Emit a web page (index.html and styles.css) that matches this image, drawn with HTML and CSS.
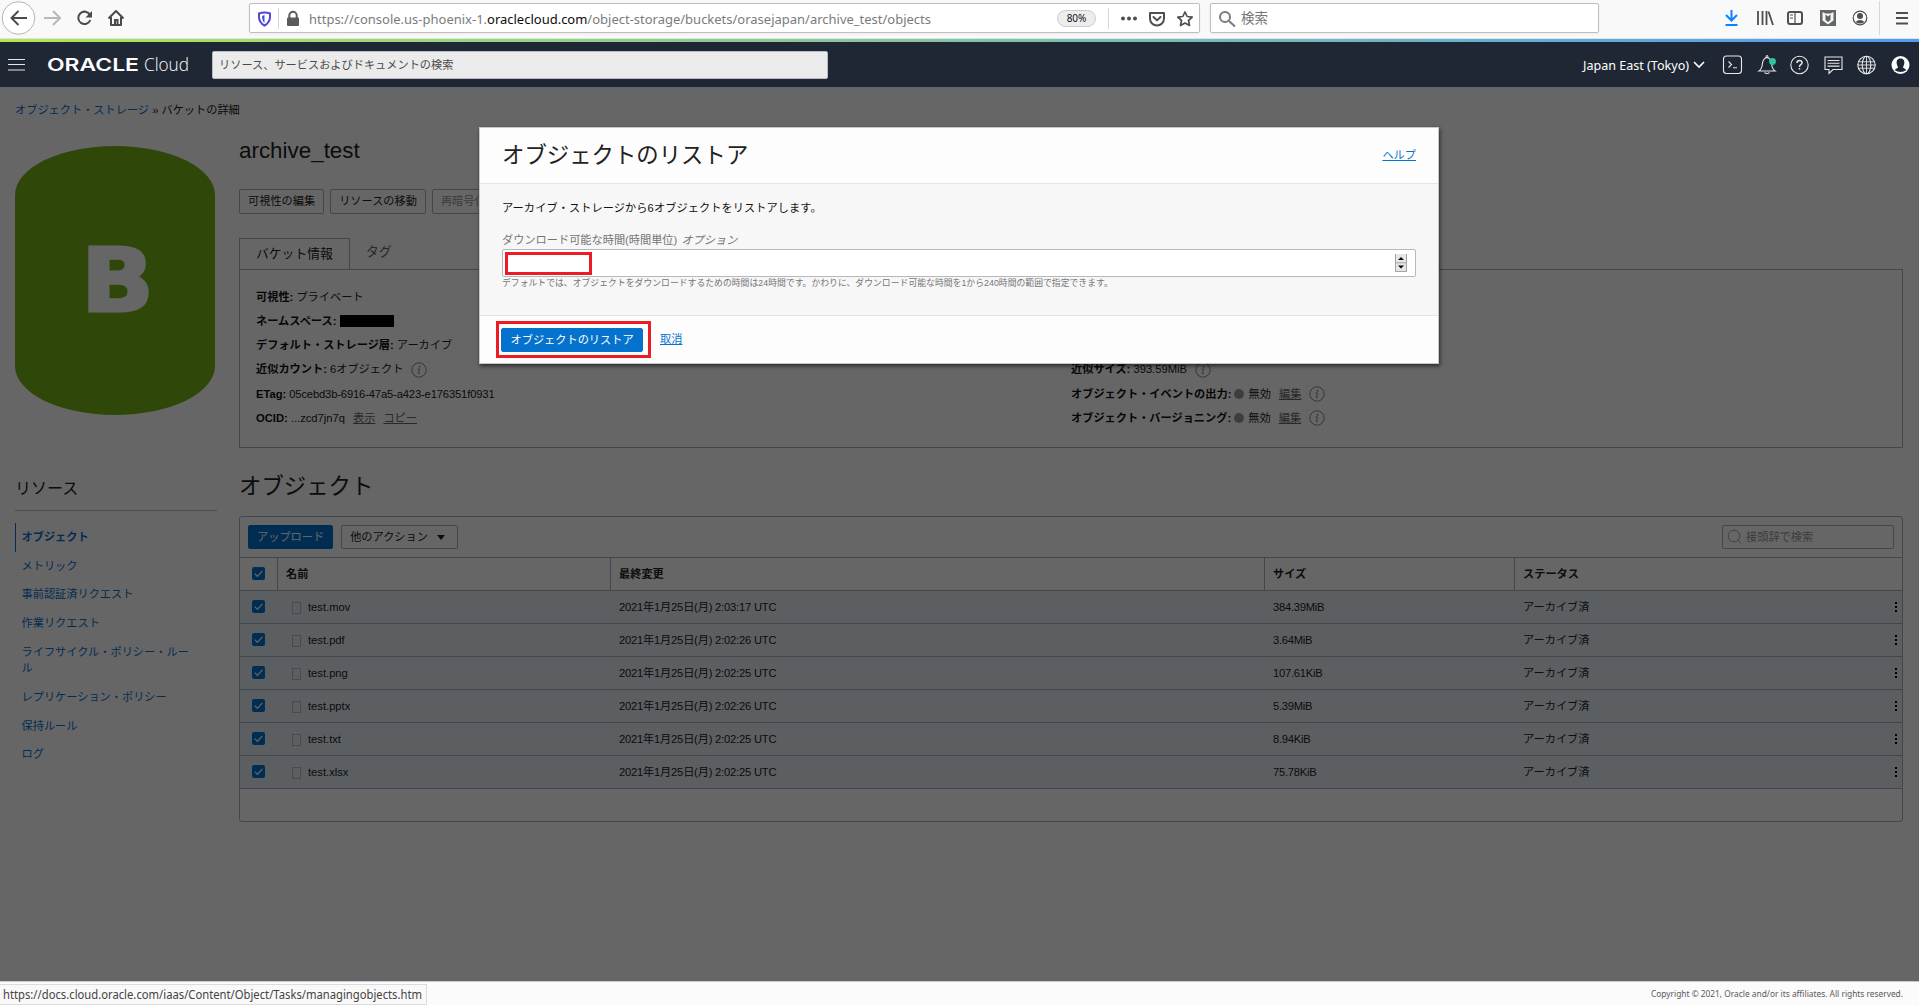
FILE: index.html
```html
<!DOCTYPE html>
<html lang="ja">
<head>
<meta charset="utf-8">
<title>archive_test - Oracle Cloud</title>
<link rel="stylesheet" href="styles.css">
</head>
<body>
<svg width="0" height="0" class="defs">
  <symbol id="info" viewBox="0 0 16 16"><circle cx="8" cy="8" r="7.2" fill="none" stroke="currentColor"/><circle cx="8.6" cy="4.6" r=".9" fill="currentColor"/><path d="M6.6 7h1.9L7.4 11.4h1.6" fill="none" stroke="currentColor"/></symbol>
  <symbol id="check" viewBox="0 0 13 13"><rect width="13" height="13" rx="2" fill="#0572ce"/><path d="M2.8 6.6l2.6 2.7 5-5.4" fill="none" stroke="#fff" stroke-width="1.2"/></symbol>
  <symbol id="file" viewBox="0 0 9 12"><rect x=".5" y=".5" width="8" height="11" fill="none" stroke="#b4b9c2"/></symbol>
  <symbol id="kebab" viewBox="0 0 2 12"><path d="M0 1h2v2H0zM0 5h2v2H0zM0 9h2v2H0z"/></symbol>
</svg>
<div class="window">
  <div class="toolbar">
    <div class="nav-buttons">
      <svg width="126" height="36" viewBox="0 0 126 36" fill="none" stroke="#4a4a4c" stroke-width="2">
        <circle cx="18.5" cy="18" r="16.3" fill="#fff" stroke="#b5b5b5" stroke-width="1"/>
        <path d="M27 18H12M18.500 11l-7 7 7 7" stroke-linejoin="round"/>
        <path d="M44 18h15M53 11l7 7-7 7" stroke="#b8b8b8" stroke-linejoin="round"/>
        <path d="M90 15a6.200 6.200 0 1 0 .3 5"/><path d="M92 11v6.500h-6.500z" fill="#4a4a4c" stroke="none"/>
        <path d="M108.500 18.500l7.500-7.500 7.500 7.500M111 17v8h10v-8" stroke-linejoin="round"/><path d="M115 25v-5h2.500v5"/>
      </svg>
    </div>
    <div class="urlbar">
      <svg width="55" height="27" viewBox="0 0 55 27">
        <path d="M9 8.500q5.500-2 11 0v3.500q0 5.500-5.500 8.500-5.500-3-5.500-8.500z" fill="none" stroke="#5546d6" stroke-width="2"/><path d="M14.500 10v8q-2.500-2-2.500-7z" fill="#3f55d0"/>
        <path d="M28.500 3v21" stroke="#d7d7db"/>
        <rect x="37" y="12.500" width="12" height="8.500" rx="1" fill="#5b5b5d"/><path d="M39.300 13v-2.500a3.700 3.700 0 0 1 7.400 0V13" fill="none" stroke="#5b5b5d" stroke-width="2"/>
      </svg>
      <svg class="url" width="630" height="27"><text x="4" y="19" textLength="622" lengthAdjust="spacingAndGlyphs">https://console.us-phoenix-1.<tspan class="domain">oraclecloud.com</tspan>/object-storage/buckets/orasejapan/archive_test/objects</text></svg>
      <span class="zoom">80%</span>
      <svg width="103" height="27" viewBox="0 0 103 27" fill="none" stroke="#4f4f51" stroke-width="2">
        <path d="M12.500 3v21" stroke="#d7d7db" stroke-width="1"/>
        <g fill="#4f4f51" stroke="none"><circle cx="27" cy="13.500" r="2"/><circle cx="33" cy="13.500" r="2"/><circle cx="39" cy="13.500" r="2"/></g>
        <path d="M54 8h14v5.500a7 7 0 0 1-14 0zM57.500 12l3.500 3.400 3.500-3.400" stroke-linejoin="round" stroke-linecap="round"/>
        <path d="M89 7l2.200 4.500 5 .6-3.700 3.400 1 5-4.500-2.500-4.500 2.500 1-5-3.700-3.400 5-.6z" stroke-width="1.700" stroke-linejoin="round"/>
      </svg>
    </div>
    <div class="browser-search">
      <svg width="30" height="27" fill="none" stroke="#7b7b7d" stroke-width="2"><circle cx="14" cy="12" r="5"/><path d="M18 16l6 5.500"/></svg>
      <span>検索</span>
    </div>
    <svg class="ext" width="196" height="36" viewBox="0 0 196 36" fill="none" stroke="#4f4f51" stroke-width="2">
      <path d="M8.500 10v10M3 15l5.500 5.500 5.500-5.500M2.500 25h12" stroke="#0a84ff"/>
      <path d="M35 11v14M39.500 11v14M43.500 11v14" stroke-width="1.800"/><path d="M45.500 11.500l4.500 13.500" stroke-width="1.800"/>
      <rect x="65" y="12" width="14" height="12" rx="2"/><path d="M72 12v12M67 15h3M67 18h3" stroke-width="1.200"/>
      <rect x="97" y="10" width="16" height="16" fill="#626769" stroke="none"/><path d="M99.500 12l3 1.500h5l3-1.500v8.500l-5.500 4-5.500-4z" fill="#f4f4f4" stroke="none"/><path d="M102.500 14.500l2.500 2 2.500-2v5.500l-2.500 2-2.500-2z" fill="#5b6062" stroke="none"/>
      <circle cx="137" cy="18" r="6.800" stroke-width="1.200"/><circle cx="137" cy="16" r="3" fill="#4f4f51" stroke="none"/><path d="M132.500 22q4.500-4 9 0-4.500 3-9 0z" fill="#4f4f51" stroke="none"/>
      <path d="M156.500 1v34" stroke="#d7d7db" stroke-width="1"/>
      <path d="M173 13h12M173 18h12M173 23.500h12" stroke-width="1.800"/>
    </svg>
  </div>
  <div class="stripe"></div>
  <header class="oci-header">
    <svg class="burger" width="17" height="12"><path d="M0 .5h17M0 5.500h17M0 11h17" stroke="#e6e6e6"/></svg>
    <svg class="logo" width="146" height="26" fill="#fff"><text class="brand" x="0" y="18.500" textLength="92" lengthAdjust="spacingAndGlyphs">ORACLE</text><text class="brand-cloud" x="97" y="18.500" textLength="45" lengthAdjust="spacingAndGlyphs">Cloud</text></svg>
    <div class="global-search">リソース、サービスおよびドキュメントの検索</div>
    <div class="region"><svg width="107" height="20"><text x="0" y="14.500" textLength="106" lengthAdjust="spacingAndGlyphs">Japan East (Tokyo)</text></svg><svg width="12" height="8"><path d="M1 1l5 5 5-5" fill="none" stroke="#fff" stroke-width="1.600"/></svg></div>
    <svg class="header-icons" width="190" height="22" viewBox="0 0 190 22" fill="none" stroke="#e8e8e8" stroke-width="1.100">
      <rect x="1.500" y="2" width="18" height="17.500" rx="3"/><path d="M6.500 7.500l3 3-3 3M11 13.800h4"/>
      <path d="M37 17h16q-3-2-3.500-8-1-5-4.500-5.500-3.500.500-4.500 5.500-.5 6-3.500 8zM44 3.500q0-2 1-2t1 2M42.500 18.500q2.500 2 5 0"/><circle cx="50.500" cy="7.500" r="3.400" fill="#2fc4a0" stroke="none"/>
      <circle cx="77.500" cy="11" r="8.700"/><path d="M75 9q0-2.500 2.500-2.500t2.500 2.200q0 1.300-1.500 2.200-1 .6-1 2M77.500 14v1.500" stroke-width="1.500"/>
      <path d="M103 3h17v12.500h-9l-4 4v-4h-4zM105.500 6.500h12M105.500 9.300h12M105.500 12.100h12"/>
      <circle cx="144.500" cy="11" r="8.700"/><ellipse cx="144.500" cy="11" rx="4.300" ry="8.700"/><path d="M144.500 2v18M136.500 7.800h16M136.500 14.200h16M135.500 11h18" stroke-width=".9"/>
      <circle cx="178.500" cy="11" r="9" fill="#fff" stroke="none"/><path d="M178.500 4.500c3.300 0 4.200 2.500 3.800 5-.3 2-1.300 3-1.300 4l3.500 2.500q-6 4-12 0l3.500-2.500c0-1-1-2-1.300-4-.4-2.500.5-5 3.800-5z" fill="#1e2733" stroke="none"/>
    </svg>
  </header>

  <main class="page">
    <nav class="crumbs"><a>オブジェクト・ストレージ</a> » バケットの詳細</nav>
    <div class="columns">
      <aside class="side">
        <div class="bucket"><span>B</span></div>
        <h3>リソース</h3>
        <ul class="resources">
          <li class="active">オブジェクト</li><li>メトリック</li><li>事前認証済リクエスト</li><li>作業リクエスト</li><li>ライフサイクル・ポリシー・ルール</li><li>レプリケーション・ポリシー</li><li>保持ルール</li><li>ログ</li>
        </ul>
      </aside>
      <section class="content">
        <h1>archive_test</h1>
        <div class="actions"><span class="btn">可視性の編集</span><span class="btn">リソースの移動</span><span class="btn disabled">再暗号化</span></div>
        <div class="tabs"><span class="tab current">バケット情報</span><span class="tab">タグ</span></div>
        <div class="panel">
          <div class="facts">
            <p><b>可視性:</b> プライベート</p>
            <p><b>ネームスペース:</b> <i class="redacted"></i></p>
            <p><b>デフォルト・ストレージ層:</b> アーカイブ</p>
            <p><b>近似カウント:</b> 6オブジェクト <svg class="info"><use href="#info"/></svg></p>
            <p><b>ETag:</b> <span class="num">05cebd3b-6916-47a5-a423-e176351f0931</span></p>
            <p><b>OCID:</b> ...zcd7jn7q <u>表示</u> <u>コピー</u></p>
          </div>
          <div class="facts right">
            <p><b>近似サイズ:</b> 393.59MiB <svg class="info"><use href="#info"/></svg></p>
            <p><b>オブジェクト・イベントの出力:</b> <i class="dot"></i> 無効 <u>編集</u> <svg class="info"><use href="#info"/></svg></p>
            <p><b>オブジェクト・バージョニング:</b> <i class="dot"></i> 無効 <u>編集</u> <svg class="info"><use href="#info"/></svg></p>
          </div>
        </div>
        <h2>オブジェクト</h2>
        <div class="objects">
          <div class="table-tools">
            <span class="btn primary">アップロード</span>
            <span class="btn menu">他のアクション <i class="caret"></i></span>
            <span class="prefix"><svg width="16" height="16" fill="none" stroke="#a6a6a6"><circle cx="7" cy="7" r="5.800"/><path d="M11 11.500l3.500 3"/></svg>接頭辞で検索</span>
          </div>
          <div class="row head"><span class="c"><svg class="cb"><use href="#check"/></svg></span><span>名前</span><span>最終変更</span><span>サイズ</span><span>ステータス</span></div>
          <div class="row"><span class="c"><svg class="cb"><use href="#check"/></svg></span><span class="name"><svg class="file"><use href="#file"/></svg>test.mov</span><span class="date">2021年1月25日(月) 2:03:17 UTC</span><span class="size">384.39MiB</span><span class="st">アーカイブ済<svg class="kebab"><use href="#kebab"/></svg></span></div>
          <div class="row"><span class="c"><svg class="cb"><use href="#check"/></svg></span><span class="name"><svg class="file"><use href="#file"/></svg>test.pdf</span><span class="date">2021年1月25日(月) 2:02:26 UTC</span><span class="size">3.64MiB</span><span class="st">アーカイブ済<svg class="kebab"><use href="#kebab"/></svg></span></div>
          <div class="row"><span class="c"><svg class="cb"><use href="#check"/></svg></span><span class="name"><svg class="file"><use href="#file"/></svg>test.png</span><span class="date">2021年1月25日(月) 2:02:25 UTC</span><span class="size">107.61KiB</span><span class="st">アーカイブ済<svg class="kebab"><use href="#kebab"/></svg></span></div>
          <div class="row"><span class="c"><svg class="cb"><use href="#check"/></svg></span><span class="name"><svg class="file"><use href="#file"/></svg>test.pptx</span><span class="date">2021年1月25日(月) 2:02:26 UTC</span><span class="size">5.39MiB</span><span class="st">アーカイブ済<svg class="kebab"><use href="#kebab"/></svg></span></div>
          <div class="row"><span class="c"><svg class="cb"><use href="#check"/></svg></span><span class="name"><svg class="file"><use href="#file"/></svg>test.txt</span><span class="date">2021年1月25日(月) 2:02:25 UTC</span><span class="size">8.94KiB</span><span class="st">アーカイブ済<svg class="kebab"><use href="#kebab"/></svg></span></div>
          <div class="row"><span class="c"><svg class="cb"><use href="#check"/></svg></span><span class="name"><svg class="file"><use href="#file"/></svg>test.xlsx</span><span class="date">2021年1月25日(月) 2:02:25 UTC</span><span class="size">75.78KiB</span><span class="st">アーカイブ済<svg class="kebab"><use href="#kebab"/></svg></span></div>
          <div class="table-foot"></div>
        </div>
      </section>
    </div>
    <div class="overlay">
      <div class="modal">
        <div class="modal-head"><span class="title">オブジェクトのリストア</span><a>ヘルプ</a></div>
        <div class="modal-body">
          <p class="lead">アーカイブ・ストレージから6オブジェクトをリストアします。</p>
          <p class="label">ダウンロード可能な時間(時間単位) <em>オプション</em></p>
          <div class="field"><i class="mark"></i><svg width="12" height="18"><rect width="12" height="18" fill="#e6e6e6"/><path d="M.5 0v17.500h11V0M0 8.800h12" fill="none" stroke="#a3a3a3"/><path d="M3 6l3-3 3 3zM3 11.500h6l-3 3z"/></svg></div>
          <p class="hint">デフォルトでは、オブジェクトをダウンロードするための時間は24時間です。かわりに、ダウンロード可能な時間を1から240時間の範囲で指定できます。</p>
        </div>
        <div class="modal-foot"><span class="mark-wrap"><span class="btn primary">オブジェクトのリストア</span></span><a>取消</a></div>
      </div>
    </div>
  </main>
  <footer class="bottom">
    <div class="status"><svg width="425" height="20"><text x="3" y="14" textLength="419" lengthAdjust="spacingAndGlyphs">https://docs.cloud.oracle.com/iaas/Content/Object/Tasks/managingobjects.htm</text></svg></div>
    <svg class="copy" width="253" height="22"><text x="0" y="15" textLength="252" lengthAdjust="spacingAndGlyphs">Copyright © 2021, Oracle and/or its affiliates. All rights reserved.</text></svg>
  </footer>
</div>
</body>
</html>
```
FILE: styles.css
```css
* { box-sizing: border-box; }
body { margin: 0; font: 11.2px/16.5px "Liberation Sans", "Noto Sans CJK JP", sans-serif; color: #222; }
p, h1, h2, h3, ul { margin: 0; padding: 0; font-weight: 400; }
svg { flex: none; display: block; overflow: visible; }
.defs { position: absolute; }
.window { width: 1919px; height: 1005px; display: flex; flex-direction: column; overflow: hidden; background: #fbfbfb; }

.toolbar { height: 39px; flex: none; display: flex; background: #f9f9fa; border-bottom: 1px solid #e2e2e2; }
.nav-buttons { width: 249px; }
.urlbar, .browser-search { height: 30px; margin-top: 3px; border: 1px solid #bfbfbf; border-radius: 2px; background: #fff; display: flex; align-items: center; box-shadow: 0 1px 3px rgba(0,0,0,.06); }
.urlbar { width: 951px; margin-right: 10px; }
.url { font: 12px "Noto Sans", sans-serif; fill: #7b7b7d; }
.domain { fill: #0c0c0d; }
.zoom { margin: 0 0 0 122px; width: 39px; height: 17px; border: 1px solid #ccc; border-radius: 9px; background: #ededf0; text-align: center; font: 10px/15px "Noto Sans", sans-serif; color: #111; }
.browser-search { width: 389px; font-size: 13.5px; color: #777; }
.browser-search span { padding-top: 2px; }
.ext { margin-left: 124px; }
.stripe { height: 3px; flex: none; background: linear-gradient(90deg, #b2e652 0, #98d580 25%, #73b8c0 67%, #4f9cf5 100%); }

.oci-header { height: 45px; flex: none; display: flex; align-items: center; background: #1e2733; color: #fff; }
.burger { margin: 0 22px 0 8px; }
.brand { font: 600 17.5px "Inter", sans-serif; }
.brand-cloud { font: 300 18.5px "Open Sans", sans-serif; }
.global-search { margin-left: 19px; width: 616px; height: 28px; border: 1px solid #b8bdc4; border-radius: 2px; background: #ebebeb; color: #4a4a4a; padding-left: 6px; line-height: 26px; }
.region { margin-left: 755px; display: flex; align-items: center; gap: 3px; fill: #fff; font: 12px "Noto Sans", sans-serif; }
.header-icons { margin-left: 17px; }

.page { height: 894px; flex: none; position: relative; background: #fff; padding: 15px 16px 0 15px; color: #222; }
.page a { color: #0572ce; }
.crumbs { height: 17px; }
.columns { display: flex; gap: 24px; }
.side { width: 200px; padding-top: 27px; }
.bucket { width: 200px; height: 269px; border-radius: 100px / 49px; background: #75b318; display: flex; justify-content: center; align-items: center; }
.bucket span { margin-left: 5px; color: #fff; font: 700 88px/88px "DejaVu Sans", sans-serif; -webkit-text-stroke: 3px #fff; transform: scaleX(1.08); }
.side h3 { margin-top: 62px; width: 202px; height: 34px; padding-top: 1px; font-size: 16px; line-height: 22px; border-bottom: 1px solid #b9bec8; }
.resources { list-style: none; margin-top: 12px; }
.resources li { width: 180px; padding: 6px 0 6.200px 6.500px; color: #0572ce; line-height: 16.500px; }
.resources .active { font-weight: 700; border-left: 1px solid #0572ce; padding-left: 5.500px; }
.content { flex: 1; padding-top: 19px; }
.content h1 { font-size: 22.4px; line-height: 26px; height: 51px; padding-top: 0; }
.actions { display: flex; gap: 6px; height: 49px; }
.btn { height: 25px; border: 1px solid #a9aeb8; border-radius: 2px; padding: 0 8px; line-height: 23px; white-space: nowrap; flex: none; }
.disabled { color: #999; }
.primary { background: #0572ce; border-color: #0572ce; color: #fff; height: 24px; line-height: 22px; }
.tabs { display: flex; height: 31px; font-size: 12.8px; }
.tab { padding: 0 16px; line-height: 27px; color: #666; }
.current { border: 1px solid #a9aeb8; border-bottom: 0; line-height: 30px; width: 111px; color: #222; }
.panel { height: 179px; border: 1px solid #a9aeb8; display: flex; padding: 15px 16px; }
.facts { width: 815px; }
.right { padding-top: 72.600px; }
.facts p { height: 24.200px; display: flex; align-items: center; white-space: pre; }
.facts b { color: #111; }
.facts u { margin-left: 5px; color: #666; }
.facts u + u, .facts u + .info { margin-left: 8px; }
.num { margin-left: 3px; letter-spacing: -.14px; }
.redacted { width: 54px; height: 12px; background: #000; margin-left: 4px; }
.info { width: 16px; height: 16px; margin-left: 5px; color: #888; }
.dot { width: 10px; height: 10px; border-radius: 5px; background: #999; margin: 0 1px 0 3px; }
.content h2 { font-size: 22.4px; line-height: 30px; height: 68px; padding-top: 24px; }
.objects { height: 306px; border: 1px solid #a9aeb8; border-radius: 3px; }
.table-tools { height: 40px; padding: 8px 8px 0; display: flex; gap: 8px; }
.menu { width: 117px; height: 24px; line-height: 22px; display: flex; align-items: center; gap: 9px; }
.caret { border: 4px solid transparent; border-top: 5px solid #222; border-bottom: 0; }
.prefix { margin-left: auto; width: 172px; height: 24px; border: 1px solid #a9aeb8; border-radius: 2px; display: flex; align-items: center; padding-left: 4px; gap: 3px; color: #999; }
.row { height: 33px; display: grid; grid-template-columns: 37px 333px 654px 250px 388px; border-top: 1px solid #a9aeb8; background: #e7edf5; line-height: 32px; }
.row > span { padding-left: 9px; }
.row .c { padding: 9px 0 0 12px; }
.row .name { display: flex; align-items: center; gap: 7px; padding-left: 15px; }
.row .date { letter-spacing: -.2px; }
.row .size { letter-spacing: -.25px; }
.row.head { background: #fff; font-weight: 700; }
.head > span + span { border-left: 1px solid #a9aeb8; padding-left: 8px; }
.cb { width: 13px; height: 13px; }
.file { width: 9px; height: 12px; margin-top: 2px; }
.row .st { display: flex; justify-content: space-between; align-items: center; padding-right: 5px; }
.kebab { width: 2px; height: 12px; }
.table-foot { border-top: 1px solid #a9aeb8; }

.overlay { position: absolute; inset: 0; background: rgba(0,0,0,.6); }
.modal { position: absolute; left: 479px; top: 40px; width: 960px; height: 237px; background: #fdfdfd; border: 1px solid #c4c8ce; box-shadow: 1px 2px 4px rgba(0,0,0,.6); }
.modal a { text-decoration: underline; }
.modal-head { height: 56px; display: flex; justify-content: space-between; align-items: center; padding: 0 22px; border-bottom: 1px solid #e4e4e4; }
.title { font-size: 22.4px; line-height: 30px; }
.modal-body { height: 132px; padding: 16px 22px 0; background: #f7f7f7; border-bottom: 1px solid #e4e4e4; }
.lead { height: 32px; color: #111; letter-spacing: .08px; }
.label { height: 17px; color: #757575; }
.label em { margin-left: 1px; }
.field { height: 28px; border: 1px solid #b3b8c2; border-radius: 2px; background: #fff; display: flex; justify-content: space-between; align-items: center; padding: 0 8px 0 2px; }
.mark { width: 87px; height: 23px; border: 3px solid #ed1c24; }
.hint { font-size: 8.8px; line-height: 13px; color: #757575; letter-spacing: .04px; }
.modal-foot { display: flex; align-items: center; padding: 5px 0 0 16px; gap: 9px; }
.mark-wrap { border: 3px solid #ed1c24; width: 155px; height: 37px; padding: 4px 2px; display: flex; }
.mark-wrap .btn { width: 142px; padding: 0 8.500px; }

.bottom { height: 24px; flex: none; border-top: 1px solid #c6cbd3; display: flex; justify-content: space-between; }
.status { margin-top: 2px; width: 427px; height: 21px; border: 1px solid #dcdcdc; border-left: 0; background: #f9f9fa; font: 12px "Noto Sans", sans-serif; fill: #444; }
.copy { margin-right: 15px; font: 9px "Noto Sans", sans-serif; fill: #5a5a5a; }
```
